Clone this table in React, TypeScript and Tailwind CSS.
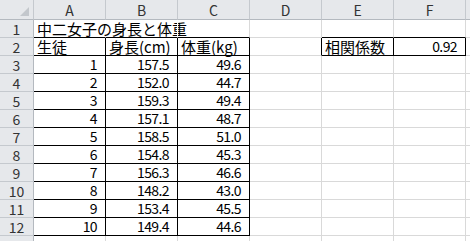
import React from "react";

const COLS = ["A", "B", "C", "D", "E", "F"];

type Cell = { t: string; align: "l" | "r" };
const data: Record<string, Cell> = {};
const set = (r: number, c: number, t: string, align: "l" | "r") => {
  data[`${r}-${c}`] = { t, align };
};
set(1, 0, "中二女子の身長と体重", "l");
set(2, 0, "生徒", "l");
set(2, 1, "身長(cm)", "l");
set(2, 2, "体重(kg)", "l");
set(2, 4, "相関係数", "l");
set(2, 5, "0.92", "r");
const rows: [number, string, string][] = [
  [1, "157.5", "49.6"],
  [2, "152.0", "44.7"],
  [3, "159.3", "49.4"],
  [4, "157.1", "48.7"],
  [5, "158.5", "51.0"],
  [6, "154.8", "45.3"],
  [7, "156.3", "46.6"],
  [8, "148.2", "43.0"],
  [9, "153.4", "45.5"],
  [10, "149.4", "44.6"],
];
rows.forEach(([n, h, w], i) => {
  set(i + 3, 0, String(n), "r");
  set(i + 3, 1, h, "r");
  set(i + 3, 2, w, "r");
});

const bordered = (r: number, c: number) =>
  (r >= 2 && r <= 12 && c >= 0 && c <= 2) || (r === 2 && (c === 4 || c === 5));

const font = { fontFamily: '"Noto Sans CJK JP", "Liberation Sans", sans-serif' };

function DataCell({ r, c }: { r: number; c: number }) {
  const cell = data[`${r}-${c}`];
  const blackR = bordered(r, c) || bordered(r, c + 1);
  const blackB = bordered(r, c) || bordered(r + 1, c);
  const hiddenR = r === 1 && (c === 0 || c === 1);
  const rCls = blackR ? "border-r-black" : hiddenR ? "border-r-white" : "border-r-[#d9d9d9]";
  const bCls = blackB ? "border-b-black" : "border-b-[#d9d9d9]";
  const right = cell?.align === "r";
  return (
    <div
      className={`relative flex h-[18px] w-[72px] shrink-0 items-end border-r border-b ${rCls} ${bCls} ${
        right ? "justify-end pr-[8px]" : "justify-start pl-[3px]"
      }`}
    >
      {cell && (
        <span
          className={`whitespace-nowrap leading-[17px] text-black ${
            right ? "text-[14px] tracking-[-0.6px]" : "text-[15px]"
          }`}
        >
          {cell.t}
        </span>
      )}
    </div>
  );
}

export default function App() {
  const rowNums = Array.from({ length: 13 }, (_, i) => i + 1);
  return (
    <div className="h-[241px] w-[470px] overflow-hidden bg-white" style={font}>
      <div className="flex h-[20px]">
        <div className="relative h-[20px] w-[34px] shrink-0 border-r border-b border-r-[#c5c9ce] border-b-[#b4b9bf] bg-[#e6e8eb]">
          <svg className="absolute right-[4px] bottom-[3px]" width="9" height="9" viewBox="0 0 9 9">
            <polygon points="9,0 9,9 0,9" fill="#c3c7cc" />
          </svg>
        </div>
        {COLS.map((c) => (
          <div
            key={c}
            className="flex h-[20px] w-[72px] shrink-0 items-center justify-center border-r border-b border-r-[#c5c9ce] border-b-[#b4b9bf] bg-[#e6e8eb] text-[14px] leading-[16px] text-[#333]"
          >
            {c}
          </div>
        ))}
        <div className="h-[20px] flex-1 border-b border-b-[#b4b9bf] bg-[#e6e8eb]" />
      </div>
      {rowNums.map((r) => (
        <div key={r} className="flex h-[18px]">
          <div className="flex h-[18px] w-[34px] shrink-0 items-center justify-center border-r border-b border-r-[#b4b9bf] border-b-[#c5c9ce] bg-[#e6e8eb] pt-[1px] text-[14px] leading-[15px] text-[#333]">
            {r <= 12 ? r : ""}
          </div>
          {COLS.map((_, c) => (
            <DataCell key={c} r={r} c={c} />
          ))}
          <div className="h-[18px] flex-1 border-b border-b-[#d9d9d9]" />
        </div>
      ))}
    </div>
  );
}
